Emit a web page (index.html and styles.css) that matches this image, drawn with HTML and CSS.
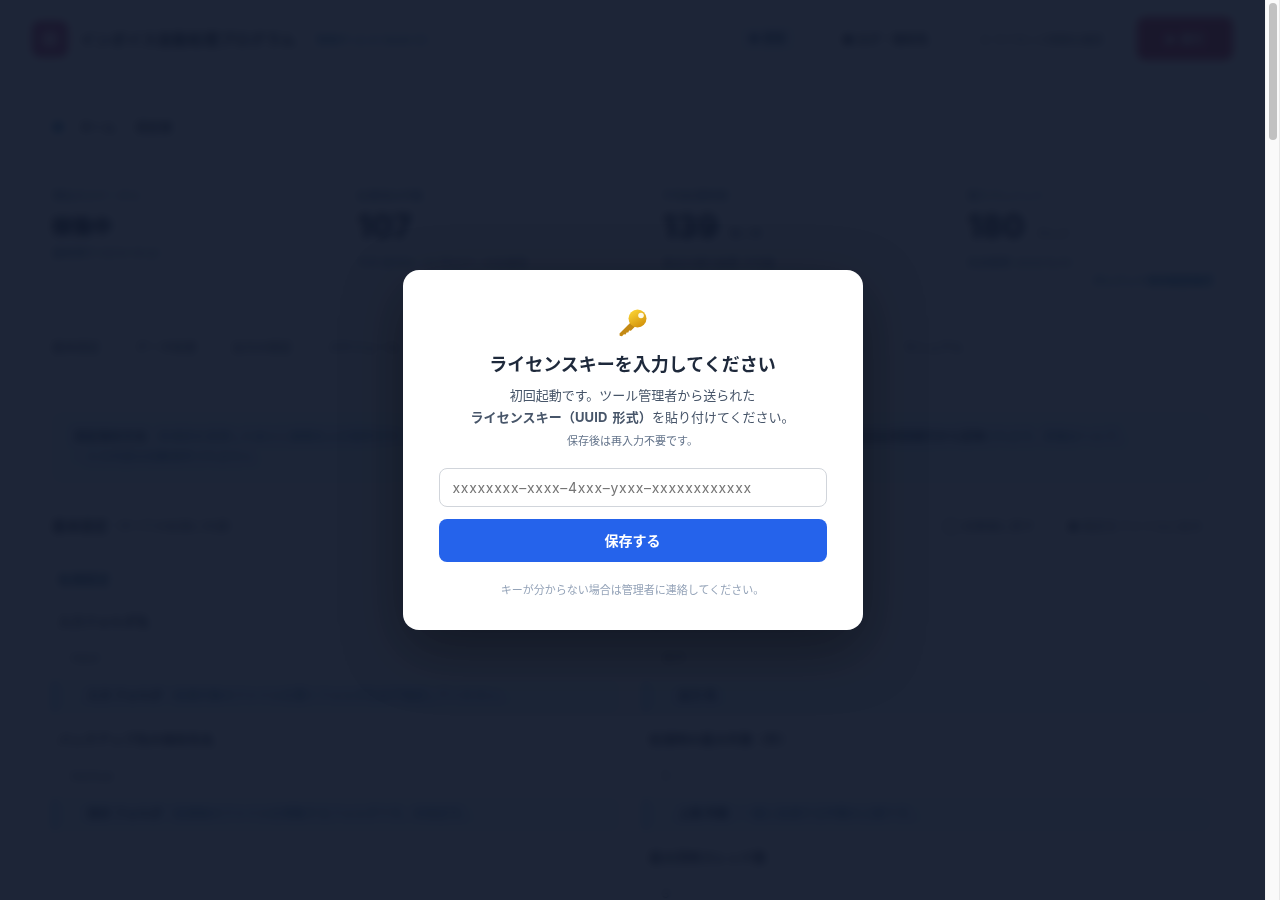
FILE: index.html
```html
<!DOCTYPE html>
<html lang="ja">
<head>
<meta charset="utf-8">
<title>ライセンスキー</title>
<link rel="stylesheet" href="styles.css">
</head>
<body>
<div class="viewport">
  <div class="page">
    <header class="topbar">
      <div class="brand">
        <span class="logo"><span class="logo-in"></span></span>
        <span class="brand-name">インボイス自動処理プログラム</span>
        <span class="brand-tag">稼働中 v2.4.1 Build 03</span>
      </div>
      <nav class="topnav">
        <span class="nav-item nav-on">● 更新</span>
        <span class="nav-item nav-strong">■ ログ・保存先</span>
        <span class="nav-item nav-plain">○ ライセンス情報を確認</span>
        <span class="nav-btn">▶ 実行</span>
      </nav>
    </header>
    <main class="content">
      <div class="crumb"><span class="crumb-dot"></span><span>ホーム</span><span>設定値</span></div>
      <section class="stats">
        <div class="stat"><div class="stat-label">現在のステータス</div><div class="stat-value small">稼働中</div><div class="stat-note near">最終実行 03/14 10:22</div></div>
        <div class="stat"><div class="stat-label">処理済み件数</div><div class="stat-value">107</div><div class="stat-note">今月 前月比 +12 件のデータを取得</div></div>
        <div class="stat"><div class="stat-label">平均処理時間</div><div class="stat-value">139<span class="unit">秒 / 件</span></div><div class="stat-note">直近の実行結果 平均値</div></div>
        <div class="stat"><div class="stat-label">残りクレジット</div><div class="stat-value">180<span class="unit">クレジ</span></div><div class="stat-note">有効期限 2025/12/31</div><div class="stat-link">クレジット使用履歴確認</div></div>
      </section>
      <div class="panel">
        <nav class="tabs">
          <span>基本設定</span><span>データ処理</span><span>出力の設定</span><span>スケジュール</span><span>通知設定一覧</span><span>連携サービス</span><span>詳細設定</span><span>ログ表示</span><span>書き出し</span><span>マニュアル</span>
        </nav>
        <div class="notice">
          <p><b>設定保存方法</b>：各項目を変更したあとに画面右上の保存ボタンを押してください。設定内容を確認してからお進みください。内容は必ず確認。<b>変更点は次回実行から反映</b>されます。詳細はヘルプ。</p>
          <p>・入力内容は自動保存されません</p>
        </div>
        <div class="section-head">
          <div class="section-title"><b>基本設定</b>（すべての処理に共通）</div>
          <div class="section-actions"><span>◯ 初期値に戻す</span><span>■ 設定をファイルに出力</span></div>
        </div>
        <h3 class="group">処理設定</h3>
        <div class="fields">
          <div class="field"><label>入力フォルダ名</label><div class="val">input</div><div class="hint"><b>入力 フォルダ</b>：処理対象のファイルを置くフォルダを必ず指定してください。</div></div>
          <div class="field"><label>出力フォルダ名</label><div class="val">出力</div><div class="hint"><b>出力 先</b></div></div>
          <div class="field"><label>バックアップ先の保存先名</label><div class="val">backup</div><div class="hint"><b>保存 フォルダ</b>：処理後のファイルを移動するフォルダです。未指定可。</div></div>
          <div class="field"><label>処理時の最大件数（件）</label><div class="val">5</div><div class="hint"><b>上限 件数</b>：一度に処理する件数の上限です。</div></div>
          <div class="field"><label>&nbsp;</label></div>
          <div class="field"><label>最大同時スレッド数</label><div class="val">3</div></div>
        </div>
      </div>
    </main>
  </div>

  <div class="overlay">
    <div class="modal">
      <div class="modal-icon" aria-label="鍵">
        <svg viewBox="0 -2 32 32" width="32" height="32">
          <defs>
            <linearGradient id="keyGold" x1="0.2" y1="0" x2="0.8" y2="1">
              <stop offset="0" stop-color="#fcd535"/>
              <stop offset="1" stop-color="#d08e08"/>
            </linearGradient>
          </defs>
          <path d="M14.500 13.500 2.500 25.500l.2 2.300 2.300.4 1.900-1.900 1.700.3 1-2.200 1.700.2.800-2.100 1.800.2 5-5z" fill="#c48a14"/>
          <circle cx="20.500" cy="10.500" r="9" fill="url(#keyGold)"/>
          <circle cx="24" cy="7.500" r="2.800" fill="#fffbe8"/>
        </svg>
      </div>
      <h2 class="modal-title">ライセンスキーを入力してください</h2>
      <p class="modal-text">初回起動です。ツール管理者から送られた<br><b>ライセンスキー（UUID 形式）</b>を貼り付けてください。</p>
      <p class="modal-sub">保存後は再入力不要です。</p>
      <input class="key-input" type="text" placeholder="xxxxxxxx–xxxx–4xxx–yxxx–xxxxxxxxxxxx">
      <button class="save-btn" type="button">保存する</button>
      <p class="modal-foot">キーが分からない場合は管理者に連絡してください。</p>
    </div>
  </div>
</div>
<div class="scrollbar"><span class="thumb"></span></div>
</body>
</html>
```
FILE: styles.css
```css
* { box-sizing: border-box; }
html, body { height: 100%; }
body {
  margin: 0;
  display: flex;
  overflow: hidden;
  background: #fff;
  color: #1e293b;
  font-family: Inter, "Noto Sans CJK JP", sans-serif;
  font-size: 13px;
}
.viewport { position: relative; flex: 1; min-width: 0; overflow: hidden; }
.scrollbar {
  flex: 0 0 15px;
  padding: 3px 2px 0 3px;
  background: #fafafa;
  border-left: 1px solid #f4f4f4;
  border-right: 1px solid #e8e8e8;
}
.thumb { display: block; width: 8px; height: 137px; border-radius: 4px; background: #c1c1c1; }
.page { height: 5800px; }
.topbar {
  height: 80px;
  padding: 0 32px 3px;
  background: #fff;
  display: flex;
  align-items: center;
  justify-content: space-between;
}
.brand { display: flex; align-items: center; gap: 12px; }
.logo {
  width: 36px; height: 36px;
  border-radius: 8px;
  background: #b91c5c;
  display: flex; align-items: center; justify-content: center;
}
.logo-in { width: 16px; height: 16px; background: #f8a5c2; border-radius: 3px; }
.brand-name { font-size: 15px; font-weight: 700; letter-spacing: 0.5px; color: #0f172a; }
.brand-tag { margin-left: 8px; font-size: 11px; color: #0369a1; }
.topnav { display: flex; align-items: center; gap: 32px; font-size: 12px; white-space: nowrap; }
.nav-item { color: #334155; }
.nav-on {
  width: 65px; height: 32px; line-height: 32px; text-align: center;
  background: #eff6ff; border-radius: 8px;
  color: #0f3d66; font-weight: 600;
}
.nav-strong { width: 107px; text-align: center; color: #0f172a; font-weight: 600; }
.nav-plain { width: 125px; margin-left: 9px; font-size: 11px; }
.nav-btn {
  width: 96px; height: 43px;
  display: flex; align-items: center; justify-content: center;
  background: #be123c;
  color: #fff;
  border-radius: 8px;
  font-weight: 700;
}
.content { padding: 20px 32px 0; }
.crumb {
  height: 53px;
  padding: 0 20px;
  border: 1px solid #eef2f7;
  border-radius: 10px;
  display: flex; align-items: center; gap: 20px;
  font-size: 12px; font-weight: 600; color: #1e293b;
}
.crumb-dot { width: 10px; height: 10px; margin-right: -3px; border-radius: 50%; background: #0369a1; }
.stats {
  display: grid;
  grid-template-columns: repeat(4, 1fr);
  gap: 19px;
  margin-top: 14px;
  height: 133px;
}
.stat { padding: 20px 19px; border: 1px solid #eef2f7; border-radius: 10px; }
.stat-label { font-size: 11px; line-height: 16px; color: #0f4c75; }
.stat-value { height: 44px; margin-top: 1px; font-size: 32px; font-weight: 800; color: #0f172a; line-height: 44px; }
.stat-value.small { height: 30px; margin-top: 8px; font-size: 20px; line-height: 30px; }
.unit { font-size: 11px; font-weight: 500; margin-left: 12px; color: #334155; }
.stat-note { font-size: 11px; line-height: 16px; color: #0f4c75; margin-top: 6px; }
.stat-note.near { margin-top: 3px; }
.stat-link { margin-top: 2px; font-size: 11px; line-height: 16px; color: #0369a1; font-weight: 600; text-align: right; }
.panel { padding: 0 23px 0 20px; }
.tabs {
  display: flex; gap: 36px;
  height: 112px;
  padding-top: 39px;
  font-size: 12px; line-height: 18px; font-weight: 500; color: #334155;
  white-space: nowrap;
}
.notice {
  padding: 15px 22px;
  height: 71px;
  background: #e0f2fe;
  border-radius: 8px;
  font-size: 12px;
  line-height: 20px;
  color: #0b5a92;
}
.notice p { margin: 0; white-space: nowrap; overflow: hidden; }
.notice b { color: #0f2a4a; }
.section-head {
  display: flex; justify-content: space-between; align-items: center;
  height: 84px;
  font-size: 12px; color: #334155;
}
.section-title b { font-size: 14px; color: #0f172a; }
.section-actions { display: flex; gap: 33px; padding-right: 8px; font-size: 12px; }
.group { margin: 0 0 0 6px; height: 44px; font-size: 13px; line-height: 24px; font-weight: 600; color: #0f4c75; }
.fields { display: grid; grid-template-columns: 1fr 1fr; column-gap: 24px; }
.field { height: 118px; }
.field label { display: block; margin-left: 6px; font-size: 13px; line-height: 20px; font-weight: 600; color: #1e293b; }
.val { height: 18px; margin: 18px 0 0 19px; font-size: 12px; line-height: 18px; color: #334155; }
.hint {
  margin-top: 13px;
  height: 33px;
  padding: 7px 32px;
  background: #e0f2fe;
  border-left: 3px solid #60a5fa;
  border-radius: 4px;
  font-size: 12px;
  line-height: 18px;
  color: #0b5a92;
  white-space: nowrap;
  overflow: hidden;
}
.hint b { color: #0f2a4a; }
.overlay {
  position: absolute;
  inset: 0;
  background: rgba(15, 23, 42, 0.94);
  backdrop-filter: blur(4px);
  display: flex;
  align-items: center;
  justify-content: center;
}
.modal {
  width: 460px;
  height: 360px;
  padding: 36px 36px 0;
  background: #fff;
  border-radius: 16px;
  box-shadow: 0 20px 60px rgba(0, 0, 0, 0.35);
  text-align: center;
}
.modal-icon { height: 33px; display: flex; justify-content: center; }
.modal-title { margin: 12px 0 0; font-size: 18px; line-height: 27px; font-weight: 700; color: #1e293b; }
.modal-text { margin: 6px 0 0; font-size: 13px; line-height: 22px; color: #475569; }
.modal-text b { letter-spacing: 0.1px; word-spacing: 2px; }
.modal-sub { margin: 5px 0 0; font-size: 11px; line-height: 16px; color: #64748b; }
.key-input {
  display: block;
  width: 100%;
  height: 39px;
  margin-top: 19px;
  padding: 0 13px;
  border: 1px solid #d1d5db;
  border-radius: 8px;
  background: #fff;
  font-family: Inter, sans-serif;
  font-size: 14px;
  letter-spacing: 0.05em;
  outline: none;
}
.key-input::placeholder { color: #757575; opacity: 1; }
.save-btn {
  display: block;
  width: 100%;
  height: 43px;
  margin-top: 12px;
  padding: 0 0 2px;
  border: 0;
  border-radius: 8px;
  background: #2563eb;
  color: #fff;
  font-family: Inter, "Noto Sans CJK JP", sans-serif;
  font-size: 14px;
  font-weight: 700;
}
.modal-foot { margin: 20px 0 0; font-size: 11px; line-height: 16px; color: #94a3b8; }
```
